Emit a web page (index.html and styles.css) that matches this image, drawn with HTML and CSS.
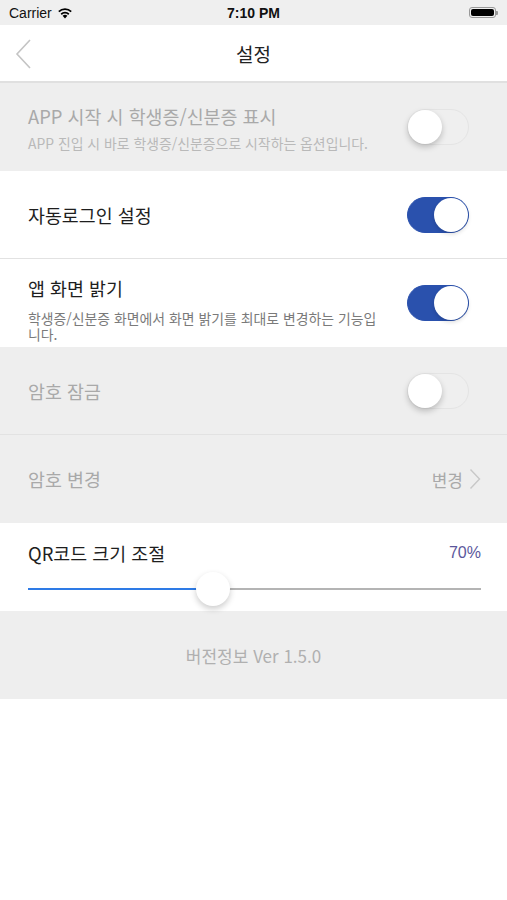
FILE: index.html
```html
<!DOCTYPE html>
<html lang="ko">
<head>
  <meta charset="UTF-8" />
  <meta name="viewport" content="width=device-width, initial-scale=1.0"/>
  <title>설정</title>
  <link rel="stylesheet" href="styles.css">
</head>
<body>
  <div class="status-bar">
    <div class="carrier">
      Carrier
      <svg class="wifi" width="16" height="12" viewBox="0 0 16 12">
        <path d="M8 11.5 L5.6 8.8 A3.6 3.6 0 0 1 10.4 8.8 Z" fill="#000"/>
        <path d="M3.6 6.6 A6.4 6.4 0 0 1 12.4 6.6 L11.2 7.9 A4.6 4.6 0 0 0 4.8 7.9 Z" fill="#000"/>
        <path d="M1.2 4 A9.8 9.8 0 0 1 14.8 4 L13.6 5.3 A8 8 0 0 0 2.4 5.3 Z" fill="#000"/>
      </svg>
    </div>
    <div class="time">7:10 PM</div>
    <div class="battery"><span class="battery-fill"></span><span class="battery-tip"></span></div>
  </div>

  <div class="nav-bar">
    <svg class="back" width="18" height="32" viewBox="0 0 18 32">
      <path d="M15 2 L2 16 L15 30" fill="none" stroke="#c4c4c4" stroke-width="1.6"/>
    </svg>
    <div class="nav-title">설정</div>
  </div>

  <div class="row disabled">
    <div class="row-text">
      <div class="row-title">APP 시작 시 학생증/신분증 표시</div>
      <div class="row-sub">APP 진입 시 바로 학생증/신분증으로 시작하는 옵션입니다.</div>
    </div>
    <div class="toggle"><span class="knob"></span></div>
  </div>

  <div class="row border-bottom">
    <div class="row-text">
      <div class="row-title">자동로그인 설정</div>
    </div>
    <div class="toggle on"><span class="knob"></span></div>
  </div>

  <div class="row tall-text">
    <div class="row-text">
      <div class="row-title">앱 화면 밝기</div>
      <div class="row-sub wrap">학생증/신분증 화면에서 화면 밝기를 최대로 변경하는 기능입니다.</div>
    </div>
    <div class="toggle on"><span class="knob"></span></div>
  </div>

  <div class="row disabled border-bottom">
    <div class="row-text">
      <div class="row-title">암호 잠금</div>
    </div>
    <div class="toggle"><span class="knob"></span></div>
  </div>

  <div class="row disabled">
    <div class="row-text">
      <div class="row-title">암호 변경</div>
    </div>
    <div class="link">
      변경
      <svg width="12" height="22" viewBox="0 0 12 22">
        <path d="M1.5 1.5 L10.5 11 L1.5 20.5" fill="none" stroke="#c8c8c8" stroke-width="1.4"/>
      </svg>
    </div>
  </div>

  <div class="row slider-row">
    <div class="slider-head">
      <div class="row-title">QR코드 크기 조절</div>
      <div class="percent">70%</div>
    </div>
    <div class="slider">
      <div class="slider-fill" style="width: 40.8%"></div>
      <div class="slider-thumb" style="left: 40.8%"></div>
    </div>
  </div>

  <div class="row disabled version">버전정보 Ver 1.5.0</div>
</body>
</html>
```

FILE: styles.css
```css
body {
  margin: 0;
  background: #fff;
  font-family: "Noto Sans CJK KR", "Noto Sans", sans-serif;
  color: #222;
}

.status-bar {
  height: 25px;
  background: #efefef;
  display: flex;
  align-items: center;
  justify-content: space-between;
  padding: 0 8px 0 9px;
  font-family: "Liberation Sans", sans-serif;
  font-size: 14px;
  color: #111;
  position: relative;
}
.carrier {
  display: flex;
  align-items: center;
  gap: 5px;
}
.time {
  position: absolute;
  left: 0;
  right: 0;
  text-align: center;
  font-weight: bold;
}
.battery {
  position: relative;
  width: 27px;
  height: 11px;
  border: 1px solid #999;
  border-radius: 3px;
  padding: 1px;
  box-sizing: border-box;
  margin-right: 3px;
}
.battery-fill {
  display: block;
  height: 100%;
  background: #000;
  border-radius: 2px;
}
.battery-tip {
  position: absolute;
  right: -3px;
  top: 3px;
  width: 2px;
  height: 4px;
  background: #999;
  border-radius: 0 1px 1px 0;
}

.nav-bar {
  height: 56px;
  background: #fff;
  border-bottom: 2px solid #e0e0e0;
  display: flex;
  align-items: center;
  justify-content: center;
  position: relative;
}
.back {
  position: absolute;
  left: 15px;
  top: 13px;
}
.nav-title {
  font-size: 19px;
  color: #222;
}

.row {
  height: 88px;
  box-sizing: border-box;
  padding: 0 38px 0 28px;
  display: flex;
  align-items: center;
  justify-content: space-between;
  background: #fff;
}
.row.disabled {
  background: #eeeeee;
}
.border-bottom {
  border-bottom: 1px solid #e2e2e2;
}
.row-title {
  font-size: 18.4px;
  line-height: 26px;
  color: #1e1e1e;
}
.row-sub {
  font-size: 13.9px;
  line-height: 16px;
  color: #7a7a7a;
  margin-top: 6px;
}
.row-sub.wrap {
  width: 352px;
  word-break: break-all;
}
.disabled .row-title {
  color: #a9a9a9;
}
.disabled .row-sub {
  color: #b9b9b9;
}
.tall-text {
  height: 88px;
  align-items: flex-start;
  padding-top: 16px;
}
.tall-text .row-sub {
  margin-top: 9px;
}
.tall-text .toggle {
  margin-top: 10px;
}

.toggle {
  width: 62px;
  height: 36px;
  border-radius: 18px;
  background: #efefef;
  border: 1px solid #e4e4e4;
  box-sizing: border-box;
  position: relative;
  flex-shrink: 0;
}
.knob {
  position: absolute;
  top: 0;
  left: 0;
  width: 34px;
  height: 34px;
  border-radius: 50%;
  background: #fff;
  box-shadow: 0 3px 6px rgba(0, 0, 0, 0.22);
}
.toggle.on {
  background: #2a51ad;
  border-color: #2a51ad;
}
.toggle.on .knob {
  left: 26px;
  box-shadow: 0 2px 4px rgba(0, 0, 0, 0.15);
}

.link {
  display: flex;
  align-items: center;
  gap: 6px;
  font-size: 17px;
  color: #a9a9a9;
  margin-right: -12px;
}

.slider-row {
  flex-direction: column;
  align-items: stretch;
  justify-content: flex-start;
  padding: 17px 26px 0 28px;
}
.slider-head {
  display: flex;
  justify-content: space-between;
  align-items: center;
}
.percent {
  font-family: "Liberation Sans", sans-serif;
  font-size: 16px;
  color: #5b579c;
}
.slider {
  position: relative;
  height: 2px;
  background: #b4b4b4;
  margin-top: 22px;
}
.slider-fill {
  height: 100%;
  background: #2e7be6;
}
.slider-thumb {
  position: absolute;
  top: -16px;
  width: 34px;
  height: 34px;
  margin-left: -17px;
  border-radius: 50%;
  background: #fff;
  box-shadow: 0 3px 6px rgba(0, 0, 0, 0.2);
}

.version {
  justify-content: center;
  font-size: 17px;
  color: #b0b0b0;
  padding: 0;
}
```
